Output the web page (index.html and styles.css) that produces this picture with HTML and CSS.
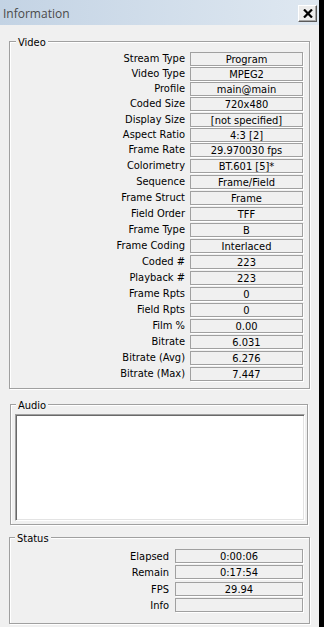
FILE: index.html
```html
<!DOCTYPE html>
<html lang="en">
<head>
<meta charset="utf-8">
<title>Information</title>
<link rel="stylesheet" href="styles.css">
</head>
<body>
<div class="window">
  <header class="titlebar">
    <span class="title">Information</span>
    <button class="close" aria-label="Close">
      <svg width="10" height="9" viewBox="0 0 10 9"><path d="M1 0.5 L9 8.5 M9 0.5 L1 8.5" stroke="#000" stroke-width="2.2" fill="none"/></svg>
    </button>
  </header>
  <main class="content">
    <section class="group video">
      <span class="group-title">Video</span>
      <div class="vrow c"><span class="lbl">Stream Type</span><span class="val">Program</span></div>
      <div class="vrow c"><span class="lbl">Video Type</span><span class="val">MPEG2</span></div>
      <div class="vrow c"><span class="lbl">Profile</span><span class="val">main@main</span></div>
      <div class="vrow c"><span class="lbl">Coded Size</span><span class="val">720x480</span></div>
      <div class="vrow c"><span class="lbl">Display Size</span><span class="val">[not specified]</span></div>
      <div class="vrow c"><span class="lbl">Aspect Ratio</span><span class="val">4:3 [2]</span></div>
      <div class="vrow"><span class="lbl">Frame Rate</span><span class="val">29.970030 fps</span></div>
      <div class="vrow"><span class="lbl">Colorimetry</span><span class="val">BT.601 [5]*</span></div>
      <div class="vrow"><span class="lbl">Sequence</span><span class="val">Frame/Field</span></div>
      <div class="vrow"><span class="lbl">Frame Struct</span><span class="val">Frame</span></div>
      <div class="vrow"><span class="lbl">Field Order</span><span class="val">TFF</span></div>
      <div class="vrow"><span class="lbl">Frame Type</span><span class="val">B</span></div>
      <div class="vrow"><span class="lbl">Frame Coding</span><span class="val">Interlaced</span></div>
      <div class="vrow"><span class="lbl">Coded #</span><span class="val">223</span></div>
      <div class="vrow"><span class="lbl">Playback #</span><span class="val">223</span></div>
      <div class="vrow"><span class="lbl">Frame Rpts</span><span class="val">0</span></div>
      <div class="vrow"><span class="lbl">Field Rpts</span><span class="val">0</span></div>
      <div class="vrow"><span class="lbl">Film %</span><span class="val">0.00</span></div>
      <div class="vrow"><span class="lbl">Bitrate</span><span class="val">6.031</span></div>
      <div class="vrow"><span class="lbl">Bitrate (Avg)</span><span class="val">6.276</span></div>
      <div class="vrow"><span class="lbl">Bitrate (Max)</span><span class="val">7.447</span></div>
    </section>
    <section class="group audio">
      <span class="group-title">Audio</span>
      <div class="listbox"></div>
    </section>
    <section class="group status">
      <span class="group-title">Status</span>
      <div class="srow"><span class="lbl">Elapsed</span><span class="val">0:00:06</span></div>
      <div class="srow"><span class="lbl">Remain</span><span class="val">0:17:54</span></div>
      <div class="srow"><span class="lbl">FPS</span><span class="val">29.94</span></div>
      <div class="srow"><span class="lbl">Info</span><span class="val"></span></div>
    </section>
  </main>
</div>
</body>
</html>
```
FILE: styles.css
```css
html, body {
  margin: 0;
  padding: 0;
  height: 100%;
  background: #000;
}

body {
  font-family: "DejaVu Sans Condensed", "DejaVu Sans", "Liberation Sans", sans-serif;
  font-stretch: condensed;
  font-size: 11px;
  color: #000;
}

.window {
  width: 319px;
  height: 627px;
  background: #f0f0f0;
  display: flex;
  flex-direction: column;
  overflow: hidden;
}

.titlebar {
  flex: none;
  height: 25px;
  box-sizing: border-box;
  display: flex;
  align-items: flex-start;
  justify-content: space-between;
  padding: 0 2px 0 3px;
  background: linear-gradient(to right, #c3d3e4, #dfe8f1);
}

.title {
  font-family: "Open Sans", "Liberation Sans", sans-serif;
  font-stretch: normal;
  font-size: 12px;
  line-height: 27px;
  color: #4a4a4a;
}

.close {
  margin-top: 5px;
  width: 19px;
  height: 17px;
  box-sizing: border-box;
  padding: 0;
  display: flex;
  align-items: center;
  justify-content: center;
  background: #ececec;
  border: 1px solid;
  border-color: #fff #5a5a5a #5a5a5a #fff;
  box-shadow: inset -1px -1px 0 #a8a8a8;
}

.content {
  padding-left: 9px;
}

.group {
  position: relative;
  box-sizing: border-box;
  border: 1px solid #a0a0a0;
  box-shadow: inset 1px 1px 0 #fff, 1px 1px 0 #fff;
}

.group-title {
  position: absolute;
  top: -6px;
  left: 5px;
  padding: 0 2px;
  line-height: 13px;
  background: #f0f0f0;
}

.video {
  width: 301px;
  height: 348px;
  margin-top: 16px;
  padding-top: 10px;
}

.video .group-title {
  left: 6px;
}

.audio {
  width: 298px;
  height: 121px;
  margin: 15px 0 0 1px;
  padding: 9px 0 0 4px;
}

.status {
  width: 301px;
  height: 87px;
  margin-top: 12px;
  padding-top: 11px;
}

.vrow {
  display: grid;
  grid-template-columns: 175px 113px;
  column-gap: 5px;
  height: 16px;
}

.vrow.c {
  height: 15.17px;
}

.srow {
  display: grid;
  grid-template-columns: 159px 128px;
  column-gap: 6px;
  height: 16.3px;
}

.lbl {
  text-align: right;
  line-height: 14px;
  white-space: nowrap;
}

.srow .lbl {
  padding-top: 1px;
}

.val {
  box-sizing: border-box;
  height: 14px;
  padding-top: 1px;
  border: 1px solid #a0a0a0;
  box-shadow: 1px 1px 0 #fff;
  text-align: center;
  line-height: 12px;
  white-space: nowrap;
}

.listbox {
  width: 290px;
  height: 107px;
  box-sizing: border-box;
  background: #fff;
  border: 1px solid;
  border-color: #a0a0a0 #fff #fff #a0a0a0;
  box-shadow: inset 1px 1px 0 #696969, inset -1px -1px 0 #e3e3e3;
}
```
